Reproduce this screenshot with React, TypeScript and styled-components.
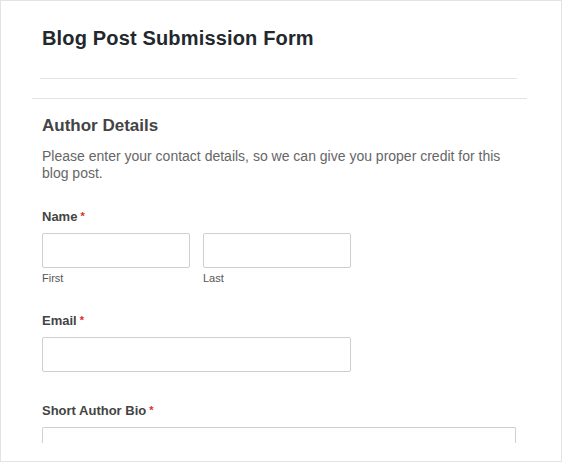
import React from "react";
import styled, { createGlobalStyle } from "styled-components";

const Global = createGlobalStyle`
  html, body { margin: 0; padding: 0; background: #ffffff; }
  * { box-sizing: border-box; }
`;

const Frame = styled.div`
  width: 562px;
  height: 462px;
  border: 1px solid #e3e3e3;
  background: #ffffff;
  overflow: hidden;
  font-family: "Liberation Sans", Arial, sans-serif;
  padding-top: 25px;
`;

const Header = styled.header`
  margin: 0 44px 0 39px;
  padding-bottom: 28px;
  border-bottom: 1px solid #e4e4e4;
`;

const Title = styled.h1`
  margin: 0 0 0 2px;
  font-size: 20px;
  line-height: 24px;
  font-weight: 700;
  color: #23282d;
  letter-spacing: 0.16px;
`;

const Section = styled.section`
  margin: 19px 34px 0 31px;
  border-top: 1px solid #e4e4e4;
  padding: 17px 0 0 10px;
`;

const SectionTitle = styled.h2`
  margin: 0;
  font-size: 17px;
  line-height: 20px;
  font-weight: 700;
  color: #444444;
`;

const Description = styled.p`
  margin: 12px 0 0;
  font-size: 14px;
  line-height: 17px;
  color: #666666;
  max-width: 470px;
`;

const Field = styled.div<{ $top: number }>`
  margin-top: ${(p) => p.$top}px;
`;

const Label = styled.label`
  display: block;
  font-size: 13px;
  line-height: 16px;
  font-weight: 700;
  color: #444444;
  margin-bottom: 8px;
`;

const Required = styled.span`
  color: #e02b27;
  margin-left: 3px;
  font-size: 11px;
  vertical-align: 1px;
`;

const NameRow = styled.div`
  display: flex;
  gap: 13px;
`;

const NamePart = styled.div`
  display: flex;
  flex-direction: column;
  width: 148px;
`;

const Input = styled.input<{ $w: number }>`
  display: block;
  width: ${(p) => p.$w}px;
  height: 35px;
  margin: 0;
  padding: 0 8px;
  border: 1px solid #cfcfcf;
  border-radius: 2px;
  background: #ffffff;
  font: inherit;
  outline: none;
`;

const SubLabel = styled.span`
  margin-top: 3px;
  font-size: 11px;
  line-height: 14px;
  color: #555555;
`;

const BioBox = styled.div`
  width: 474px;
  height: 16px;
  border: 1px solid #cfcfcf;
  border-bottom: none;
  border-radius: 2px 2px 0 0;
`;

export default function App() {
  return (
    <>
      <Global />
      <Frame>
        <Header>
          <Title>Blog Post Submission Form</Title>
        </Header>
        <Section>
          <SectionTitle>Author Details</SectionTitle>
          <Description>
            Please enter your contact details, so we can give you proper credit for this blog post.
          </Description>
          <Field $top={26}>
            <Label>
              Name<Required>*</Required>
            </Label>
            <NameRow>
              <NamePart>
                <Input $w={148} />
                <SubLabel>First</SubLabel>
              </NamePart>
              <NamePart>
                <Input $w={148} />
                <SubLabel>Last</SubLabel>
              </NamePart>
            </NameRow>
          </Field>
          <Field $top={27}>
            <Label>
              Email<Required>*</Required>
            </Label>
            <Input $w={309} />
          </Field>
          <Field $top={30}>
            <Label>
              Short Author Bio<Required>*</Required>
            </Label>
            <BioBox />
          </Field>
        </Section>
      </Frame>
    </>
  );
}
